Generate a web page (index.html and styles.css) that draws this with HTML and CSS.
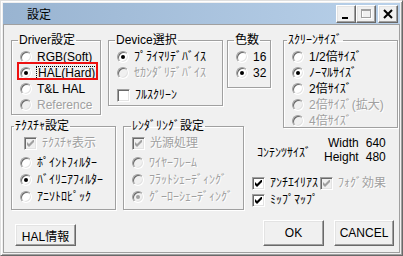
FILE: index.html
```html
<!DOCTYPE html>
<html>
<head>
    <meta charset="utf-8">
    <title>設定</title>
    <link rel="stylesheet" href="styles.css">
</head>
<body>
    <div class="window">
        <div class="titlebar">
            <span class="title">設定</span>
            <div class="caption-buttons">
                <span class="cap-btn"><svg width="18" height="16"><rect x="5" y="11" width="6" height="2" fill="#000"/></svg></span>
                <span class="cap-btn"><svg width="18" height="16"><rect x="5.5" y="4.5" width="9" height="8" fill="none" stroke="#fff"/><rect x="4.5" y="3.5" width="9" height="8" fill="none" stroke="#a0a0a0"/><rect x="4" y="3" width="10" height="2" fill="#a0a0a0"/></svg></span>
                <span class="cap-btn close"><svg width="18" height="16"><path d="M5 4l8 8M13 4l-8 8" stroke="#000" stroke-width="2"/></svg></span>
            </div>
        </div>

        <div class="client">
            <div class="top-row">
                <fieldset class="group driver">
                    <legend>Driver設定</legend>
                    <div class="opt"><span class="radio"></span>RGB(Soft)</div>
                    <div class="opt marked"><span class="radio on"></span><span class="focus">HAL(Hard)</span></div>
                    <div class="opt"><span class="radio"></span>T&amp;L HAL</div>
                    <div class="opt dis"><span class="radio"></span>Reference</div>
                </fieldset>

                <fieldset class="group device">
                    <legend>Device選択</legend>
                    <div class="opt"><span class="radio on"></span>ﾌﾟﾗｲﾏﾘﾃﾞﾊﾞｲｽ</div>
                    <div class="opt dis"><span class="radio"></span>ｾｶﾝﾀﾞﾘﾃﾞﾊﾞｲｽ</div>
                    <div class="opt spaced"><span class="check"></span>ﾌﾙｽｸﾘｰﾝ</div>
                </fieldset>

                <fieldset class="group colors">
                    <legend>色数</legend>
                    <div class="opt"><span class="radio"></span>16</div>
                    <div class="opt"><span class="radio on"></span>32</div>
                </fieldset>

                <fieldset class="group screen">
                    <legend>ｽｸﾘｰﾝｻｲｽﾞ</legend>
                    <div class="opt"><span class="radio"></span>1/2倍ｻｲｽﾞ</div>
                    <div class="opt"><span class="radio on"></span>ﾉｰﾏﾙｻｲｽﾞ</div>
                    <div class="opt"><span class="radio"></span>2倍ｻｲｽﾞ</div>
                    <div class="opt dis"><span class="radio"></span>2倍ｻｲｽﾞ(拡大)</div>
                    <div class="opt dis"><span class="radio"></span>4倍ｻｲｽﾞ</div>
                </fieldset>
            </div>

            <div class="middle-row">
                <fieldset class="group texture">
                    <legend>ﾃｸｽﾁｬ設定</legend>
                    <div class="opt dis indent"><span class="check"><svg width="7" height="7"><path d="M0 2l2 2l5-5v3l-5 5l-2-2z"/></svg></span>ﾃｸｽﾁｬ表示</div>
                    <div class="radios">
                        <div class="opt"><span class="radio"></span>ﾎﾟｲﾝﾄﾌｨﾙﾀｰ</div>
                        <div class="opt"><span class="radio on"></span>ﾊﾞｲﾘﾆｱﾌｨﾙﾀｰ</div>
                        <div class="opt"><span class="radio"></span>ｱﾆｿﾄﾛﾋﾟｯｸ</div>
                    </div>
                </fieldset>

                <fieldset class="group render">
                    <legend>ﾚﾝﾀﾞﾘﾝｸﾞ設定</legend>
                    <div class="opt dis"><span class="check"><svg width="7" height="7"><path d="M0 2l2 2l5-5v3l-5 5l-2-2z"/></svg></span>光源処理</div>
                    <div class="radios">
                        <div class="opt dis"><span class="radio"></span>ﾜｲﾔｰﾌﾚｰﾑ</div>
                        <div class="opt dis"><span class="radio"></span>ﾌﾗｯﾄｼｪｰﾃﾞｨﾝｸﾞ</div>
                        <div class="opt dis"><span class="radio on"></span>ｸﾞｰﾛｰｼｪｰﾃﾞｨﾝｸﾞ</div>
                    </div>
                </fieldset>

                <div class="extras">
                    <div class="size-info">
                        <span class="size-label">ｺﾝﾃﾝﾂｻｲｽﾞ</span>
                        <div class="dims">
                            <span>Width</span><span>640</span>
                            <span>Height</span><span>480</span>
                        </div>
                    </div>
                    <div class="checks">
                        <div class="check-line">
                            <div class="opt"><span class="check"><svg width="7" height="7"><path d="M0 2l2 2l5-5v3l-5 5l-2-2z"/></svg></span>ｱﾝﾁｴｲﾘｱｽ</div>
                            <div class="opt dis"><span class="check"><svg width="7" height="7"><path d="M0 2l2 2l5-5v3l-5 5l-2-2z"/></svg></span>ﾌｫｸﾞ効果</div>
                        </div>
                        <div class="opt"><span class="check"><svg width="7" height="7"><path d="M0 2l2 2l5-5v3l-5 5l-2-2z"/></svg></span>ﾐｯﾌﾟﾏｯﾌﾟ</div>
                    </div>
                </div>
            </div>

            <div class="button-row">
                <button type="button" class="btn hal-btn">HAL情報</button>
                <button type="button" class="btn ok-btn">OK</button>
                <button type="button" class="btn cancel-btn">CANCEL</button>
            </div>
        </div>
    </div>
</body>
</html>
```

FILE: styles.css
```css
/* Classic Windows style settings dialog */
* {
    box-sizing: border-box;
}
body {
    margin: 0;
    background-color: #fff;
    font-family: "Liberation Sans", "Noto Sans CJK JP", sans-serif;
    font-size: 12px;
    color: #000;
}
.window {
    width: 403px;
    height: 256px;
    display: flex;
    flex-direction: column;
    padding: 2px;
    background-color: #f0f0f0;
    border: 1px solid;
    border-color: #dfdfdf #696969 #696969 #dfdfdf;
    box-shadow: inset 1px 1px #fff, inset -1px -1px #a0a0a0;
}

/* Title bar */
.titlebar {
    height: 21px;
    display: flex;
    align-items: center;
    padding-left: 24px;
    background: linear-gradient(to right, #99b4d1, #b9d1ea);
}
.title {
    font-family: "Noto Sans CJK JP", sans-serif;
    font-size: 12px;
    line-height: 14px;
}
.caption-buttons {
    display: flex;
    margin-left: auto;
    margin-right: 2px;
}
.cap-btn {
    display: block;
    width: 20px;
    height: 18px;
    border: 1px solid;
    border-color: #fff #696969 #696969 #fff;
    box-shadow: inset -1px -1px #a0a0a0, inset 1px 1px #e3e3e3;
    background-color: #f0f0f0;
}
.cap-btn svg {
    display: block;
}
.cap-btn.close {
    margin-left: 2px;
}

/* Client area */
.client {
    flex: 1;
    display: flex;
    flex-direction: column;
    border: 1px solid #a0a0a0;
    padding: 9px 0 6px 7px;
}
.top-row,
.middle-row {
    display: flex;
    align-items: flex-start;
}

/* Group boxes */
.group {
    margin: 0;
    padding: 2px 0 0 8px;
    border: 1px solid #a0a0a0;
    box-shadow: inset 1px 1px #fff, 1px 1px #fff;
    min-width: 0;
}
.group legend {
    padding: 0 1px;
    margin-left: -2px;
    line-height: 13px;
}
.driver {
    width: 90px;
    height: 81px;
}
.device {
    width: 115px;
    height: 72px;
    margin-left: 7px;
}
.colors {
    width: 44px;
    height: 54px;
    margin-left: 4px;
}
.screen {
    width: 115px;
    height: 94px;
    margin-left: 12px;
    margin-bottom: -8px;
}
.screen legend {
    margin-left: -5px;
}
.texture {
    width: 105px;
    height: 90px;
}
.texture legend {
    margin-left: -6px;
}
.render {
    width: 121px;
    height: 90px;
    margin-left: 7px;
}
.render legend {
    margin-left: -1px;
}

/* Options */
.opt {
    display: flex;
    align-items: center;
    height: 16px;
    line-height: 16px;
    white-space: nowrap;
}
.opt.spaced {
    margin-top: 6px;
}
.opt.indent {
    margin-left: 4px;
}
.radios {
    margin-top: 3px;
}
.radios .opt {
    height: 17px;
}
.dis {
    color: #a0a0a0;
    text-shadow: 1px 1px #fff;
}
.radio {
    flex: none;
    width: 12px;
    height: 12px;
    margin-right: 5px;
    border-radius: 50%;
    border: 1px solid;
    border-color: #a0a0a0 #fff #fff #a0a0a0;
    background-color: #fff;
    box-shadow: inset 1px 1px #696969, inset -1px -1px #e3e3e3;
    display: flex;
    align-items: center;
    justify-content: center;
}
.radio.on::after {
    content: "";
    width: 4px;
    height: 4px;
    border-radius: 50%;
    background-color: #000;
}
.dis .radio {
    background-color: #f0f0f0;
}
.dis .radio.on::after {
    background-color: #a0a0a0;
}
.check {
    flex: none;
    width: 13px;
    height: 13px;
    margin-right: 5px;
    border: 1px solid;
    border-color: #a0a0a0 #fff #fff #a0a0a0;
    background-color: #fff;
    box-shadow: inset 1px 1px #696969, inset -1px -1px #e3e3e3;
    display: flex;
    align-items: center;
    justify-content: center;
}
.check svg {
    display: block;
    fill: #000;
}
.dis .check {
    background-color: #f0f0f0;
}
.dis .check svg {
    fill: #a0a0a0;
}

/* Red marker around the selected driver */
.marked {
    position: relative;
    width: fit-content;
}
.marked::after {
    content: "";
    position: absolute;
    left: -3px;
    top: -3px;
    right: -2px;
    bottom: 1px;
    border: 2px solid #ee1111;
}
.focus {
    display: inline-block;
    line-height: 12px;
    padding: 0 1px;
    outline: 1px dotted #000;
}

/* Content size and extra checkboxes */
.extras {
    margin-left: 8px;
    padding-top: 16px;
}
.size-info {
    display: flex;
    align-items: center;
    margin-left: 5px;
}
.size-label {
    padding-top: 6px;
    line-height: 14px;
}
.dims {
    display: grid;
    grid-template-columns: auto auto;
    column-gap: 7px;
    margin-left: 13px;
    line-height: 14px;
}
.dims span:nth-child(odd) {
    justify-self: end;
}
.checks {
    margin-top: 11px;
}
.check-line {
    display: flex;
    gap: 2px;
}
.check-line + .opt {
    margin-top: 1px;
}

/* Buttons */
.button-row {
    display: flex;
    align-items: flex-end;
    margin-top: auto;
}
.btn {
    font: inherit;
    color: #000;
    padding: 0;
    background-color: #f0f0f0;
    border: 1px solid;
    border-color: #fff #696969 #696969 #fff;
    box-shadow: inset -1px -1px #a0a0a0, inset 1px 1px #e3e3e3;
}
.hal-btn {
    width: 61px;
    height: 22px;
    margin-left: 4px;
}
.ok-btn {
    width: 61px;
    height: 26px;
    margin-left: auto;
}
.cancel-btn {
    width: 60px;
    height: 26px;
    margin-left: 10px;
    margin-right: 5px;
}
```
